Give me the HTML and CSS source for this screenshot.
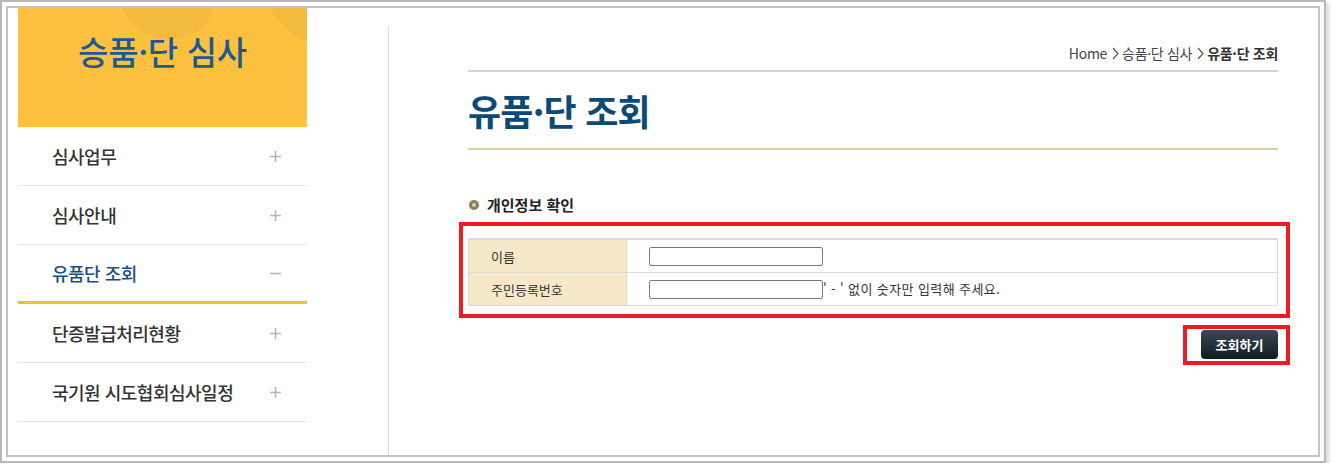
FILE: index.html
```html
<!DOCTYPE html>
<html lang="ko">
<head>
    <meta charset="UTF-8">
    <meta name="viewport" content="width=device-width, initial-scale=1.0">
    <title>유품·단 조회</title>
    <link rel="stylesheet" href="styles.css">
</head>
<body>
    <div class="frame">
        <div class="window">
            <div class="sidebar">
                <div class="side-head">
                    <h2>승품·단 심사</h2>
                </div>
                <ul class="menu">
                    <li><span>심사업무</span><svg class="toggle" width="11" height="11" viewBox="0 0 11 11"><path d="M0 5.5H11M5.5 0V11"/></svg></li>
                    <li><span>심사안내</span><svg class="toggle" width="11" height="11" viewBox="0 0 11 11"><path d="M0 5.5H11M5.5 0V11"/></svg></li>
                    <li class="active"><span>유품단 조회</span><svg class="toggle" width="11" height="11" viewBox="0 0 11 11"><path d="M0 5.5H11"/></svg></li>
                    <li><span>단증발급처리현황</span><svg class="toggle" width="11" height="11" viewBox="0 0 11 11"><path d="M0 5.5H11M5.5 0V11"/></svg></li>
                    <li><span>국기원 시도협회심사일정</span><svg class="toggle" width="11" height="11" viewBox="0 0 11 11"><path d="M0 5.5H11M5.5 0V11"/></svg></li>
                </ul>
            </div>

            <div class="divider"></div>

            <div class="content">
                <div class="breadcrumb">
                    Home<svg class="sep" width="10" height="13" viewBox="0 0 10 13"><path d="M3 1L8 6.5L3 12"/></svg>승품·단 심사<svg class="sep" width="10" height="13" viewBox="0 0 10 13"><path d="M3 1L8 6.5L3 12"/></svg><strong>유품·단 조회</strong>
                </div>
                <h1 class="page-title">유품·단 조회</h1>

                <h3 class="section-title"><span class="bullet"></span>개인정보 확인</h3>

                <div class="highlight">
                    <table class="form-table">
                        <tr>
                            <th>이름</th>
                            <td><input type="text"></td>
                        </tr>
                        <tr>
                            <th>주민등록번호</th>
                            <td><input type="text">' - ' 없이 숫자만 입력해 주세요.</td>
                        </tr>
                    </table>
                </div>

                <div class="actions">
                    <div class="highlight-btn">
                        <button type="button">조회하기</button>
                    </div>
                </div>
            </div>
        </div>
    </div>
</body>
</html>
```

FILE: styles.css
```css
body {
    margin: 0;
    padding: 0;
    background-color: #fff;
    font-family: "Noto Sans CJK KR", "Noto Sans", sans-serif;
    color: #333;
}
.frame {
    box-sizing: border-box;
    width: 1326px;
    height: 463px;
    padding: 4px;
    border: 2px solid #b9b9b9;
    background-color: #fff;
    box-shadow: 3px 3px 4px rgba(0, 0, 0, 0.15);
}
.window {
    box-sizing: border-box;
    height: 100%;
    border: 2px solid #c4c4c4;
    display: flex;
    overflow: hidden;
}

/* left menu */
.sidebar {
    width: 289px;
    margin-left: 10px;
    flex-shrink: 0;
}
.side-head {
    position: relative;
    height: 119px;
    background-color: #fdc13f;
    overflow: hidden;
}
.side-head::before {
    content: "";
    position: absolute;
    left: 100px;
    top: -50px;
    width: 96px;
    height: 80px;
    border-radius: 50%;
    background-color: #f5bb3e;
    transform: rotate(20deg);
}
.side-head::after {
    content: "";
    position: absolute;
    left: 240px;
    top: -128px;
    width: 170px;
    height: 170px;
    border-radius: 50%;
    background-color: #f5bb3e;
}
.side-head h2 {
    position: relative;
    z-index: 1;
    margin: 0;
    padding-top: 23px;
    text-align: center;
    font-size: 33px;
    font-weight: 500;
    line-height: 40px;
    color: #1d5a92;
    letter-spacing: -0.3px;
}
.menu {
    list-style: none;
    margin: 0;
    padding: 0;
}
.menu li {
    height: 58px;
    display: flex;
    align-items: center;
    justify-content: space-between;
    padding: 0 26px 0 34px;
    border-bottom: 1px solid #e6e6e6;
    font-size: 18px;
    font-weight: 500;
    color: #333;
    letter-spacing: -0.5px;
}
.menu li.active {
    height: 56px;
    border-bottom: 3px solid #f9bd3d;
    color: #1b4e7e;
}
.toggle {
    stroke: #b4b4b4;
    stroke-width: 1.6;
    fill: none;
}

.divider {
    width: 1px;
    margin: 18px 0 0 81px;
    background-color: #dcdcdc;
    flex-shrink: 0;
}

/* content */
.content {
    width: 810px;
    margin-left: 79px;
    padding-top: 35px;
}
.breadcrumb {
    display: flex;
    justify-content: flex-end;
    align-items: center;
    font-size: 14px;
    line-height: 20px;
    color: #444;
    padding-bottom: 7px;
    border-bottom: 2px solid #d2d2d2;
    letter-spacing: -0.3px;
}
.breadcrumb strong {
    color: #333;
}
.breadcrumb .sep {
    margin: 0 2px 0 3px;
    stroke: #555;
    stroke-width: 1.2;
    fill: none;
}
.page-title {
    margin: 18px 0 0;
    padding-bottom: 18px;
    border-bottom: 2px solid #dfd09b;
    font-size: 36px;
    line-height: 40px;
    font-weight: 700;
    color: #0d4a75;
    letter-spacing: -0.8px;
}
.section-title {
    display: flex;
    align-items: center;
    margin: 45px 0 0;
    font-size: 15px;
    line-height: 20px;
    font-weight: 700;
    color: #222;
}
.bullet {
    box-sizing: border-box;
    width: 10px;
    height: 10px;
    margin: 0 8px 0 1px;
    border: 3px solid #8b7f5a;
    border-radius: 50%;
    background-color: #d9d2bd;
}
.highlight {
    margin: 7px -12px 0 -9px;
    padding: 12px 8px 8px 5px;
    border: 4px solid #ed1c24;
}
.form-table {
    width: 100%;
    border-collapse: collapse;
    border-top: 2px solid #dadada;
    border-bottom: 1px solid #dadada;
    border-left: 1px solid #dadada;
    border-right: 1px solid #dadada;
    font-size: 13px;
    color: #333;
}
.form-table th,
.form-table td {
    height: 32px;
    padding: 0;
    border-bottom: 1px solid #dadada;
    text-align: left;
    font-weight: 400;
}
.form-table th {
    width: 135px;
    padding-left: 22px;
    background-color: #f7e8c9;
    border-right: 1px solid #dadada;
}
.form-table td {
    padding-left: 22px;
    letter-spacing: 0.4px;
}
.form-table input {
    box-sizing: border-box;
    width: 174px;
    height: 19px;
    margin: 0;
    border: 1px solid #7a7a7a;
    border-radius: 2px;
    vertical-align: middle;
}
.actions {
    display: flex;
    justify-content: flex-end;
    margin-right: -12px;
    margin-top: 7px;
}
.highlight-btn {
    padding: 1px 8px 2px 14px;
    border: 4px solid #ed1c24;
}
.highlight-btn button {
    display: block;
    width: 77px;
    height: 29px;
    border: none;
    border-radius: 4px;
    background: linear-gradient(#3b4952, #0f1c24);
    color: #fff;
    font-family: "Noto Sans CJK KR", sans-serif;
    font-size: 13px;
    font-weight: 700;
    cursor: pointer;
}
```
